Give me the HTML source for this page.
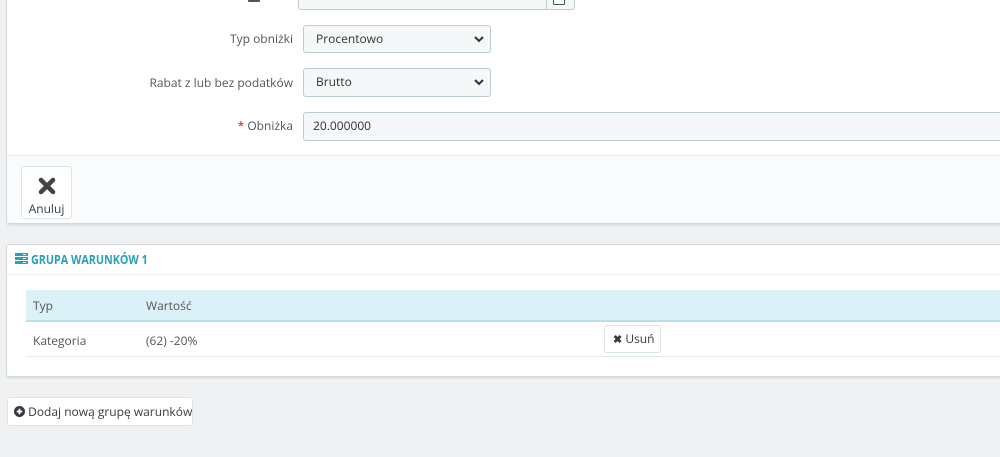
<!DOCTYPE html>
<html><head><meta charset="utf-8"><style>
body{margin:0;width:1000px;height:457px;background:#eff1f2;font-family:"Open Sans","Liberation Sans",sans-serif;font-size:12px;color:#555;position:relative;overflow:hidden}
.abs{position:absolute;box-sizing:border-box;white-space:nowrap}
.panel{background:#fff;border:1px solid #d3d8db;border-radius:3px;box-shadow:0 2px 0 rgba(0,0,0,.06)}
.inp{background:#f5f8f9;border:1px solid #bbcdd2;border-radius:3px;padding-left:12px;line-height:26px;color:#333}
.lbl{text-align:right;width:200px;left:93px;line-height:28px;color:#555}
.btn{background:#fff;border:1px solid #dbe6e9;border-radius:3px;color:#363a41}
.chev{position:absolute;right:6px;top:8px}
</style></head><body>
<div class="abs panel" style="left:6px;top:-5px;width:1000px;height:229px;"></div>
<div class="abs" style="left:7px;top:155px;width:993px;height:68px;background:#fafbfc;border-top:1px solid #e6e9eb"></div>
<div class="abs inp" style="left:298px;top:-18px;width:277px;height:28px;"></div>
<div class="abs" style="left:546px;top:-18px;width:1px;height:28px;background:#bbcdd2"></div>
<div class="abs" style="left:553px;top:-4px;width:12px;height:9px;border:1.5px solid #555;border-radius:1px"></div>
<div class="abs" style="left:248px;top:-2px;width:12px;height:4px;background:#555;border-radius:1px"></div>
<div class="abs lbl" style="top:25px">Typ obniżki</div>
<div class="abs inp" style="left:303px;top:25px;width:188px;height:28px">Procentowo<svg class="chev" width="10" height="10" viewBox="0 0 10 10"><path d="M1 3l4 4 4-4" fill="none" stroke="#333" stroke-width="2"/></svg></div>
<div class="abs lbl" style="top:69px">Rabat z lub bez podatków</div>
<div class="abs inp" style="left:303px;top:68px;width:188px;height:29px">Brutto<svg class="chev" width="10" height="10" viewBox="0 0 10 10"><path d="M1 3l4 4 4-4" fill="none" stroke="#333" stroke-width="2"/></svg></div>
<div class="abs lbl" style="top:112px"><span style="color:#e00">*</span> Obniżka</div>
<div class="abs inp" style="left:303px;top:112px;width:700px;height:29px;padding-left:9px">20.000000</div>
<div class="abs btn" style="left:21px;top:166px;width:51px;height:53px;text-align:center">
<svg style="margin-top:10px" width="18" height="18" viewBox="0 0 18 18"><path d="M3 3L15 15M15 3L3 15" stroke="#444" stroke-width="4.5" stroke-linecap="round"/></svg>
<div style="margin-top:1px;font-size:12px">Anuluj</div></div>

<div class="abs panel" style="left:6px;top:244px;width:1000px;height:133px"></div>
<div class="abs" style="left:7px;top:274px;width:993px;height:1px;background:#eef0f1"></div>
<svg class="abs" style="left:15px;top:253px" width="13" height="11" viewBox="0 0 13 11"><rect x="0" y="0" width="13" height="3" fill="#2a9fb8"/><rect x="0" y="4" width="13" height="3" fill="#2a9fb8"/><rect x="0" y="8" width="13" height="3" fill="#2a9fb8"/><rect x="8" y="1" width="3" height="1" fill="#fff"/><rect x="8" y="5" width="3" height="1" fill="#fff"/><rect x="8" y="9" width="3" height="1" fill="#fff"/></svg>
<div class="abs" style="left:31px;top:251px;color:#2a9fb8;font-size:12.5px;font-weight:bold;transform:scaleX(.86);transform-origin:left">GRUPA WARUNKÓW 1</div>
<div class="abs" style="left:26px;top:290px;width:974px;height:32px;background:#daf1f8;border-bottom:2px solid #b9dfea"></div>
<div class="abs" style="left:33px;top:297px">Typ</div>
<div class="abs" style="left:146px;top:297px">Wartość</div>
<div class="abs" style="left:33px;top:332px">Kategoria</div>
<div class="abs" style="left:146px;top:332px">(62) -20%</div>
<div class="abs" style="left:26px;top:356px;width:974px;height:1px;background:#e6e9eb"></div>
<div class="abs btn" style="left:604px;top:325px;width:57px;height:28px;line-height:26px;padding-left:8px"><b style="font-size:11px">✖</b> Usuń</div>
<div class="abs btn" style="left:7px;top:397px;width:186px;height:29px;line-height:27px;padding-left:6px"><svg width="11" height="11" viewBox="0 0 12 12" style="vertical-align:-1px"><circle cx="6" cy="6" r="6" fill="#363a41"/><path d="M6 3v6M3 6h6" stroke="#fff" stroke-width="2"/></svg> Dodaj nową grupę warunków</div>
</body></html>
